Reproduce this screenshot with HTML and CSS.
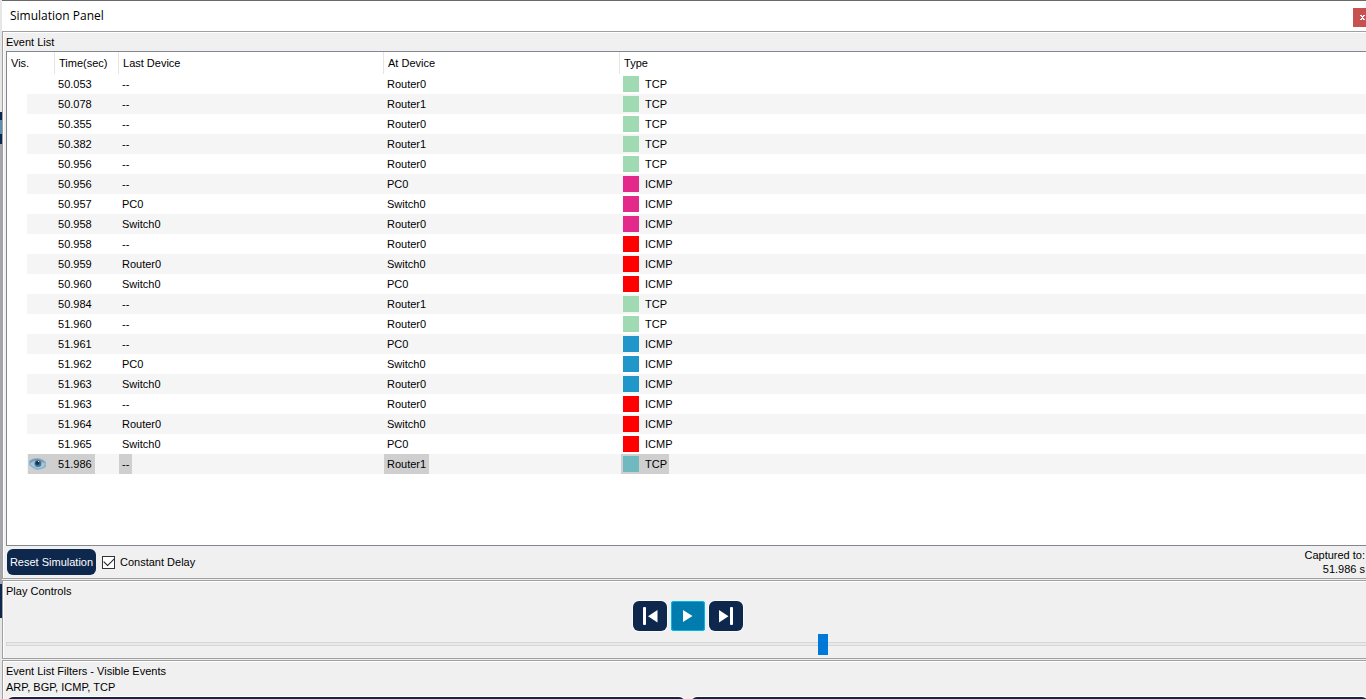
FILE: index.html
```html
<!DOCTYPE html>
<html lang="en">
<head>
<meta charset="utf-8">
<title>Simulation Panel</title>
<link rel="stylesheet" href="styles.css">
</head>
<body>
<div class="workspace-edge" aria-hidden="true">
  <div class="edge-light"></div>
  <div class="edge-tool"></div>
  <div class="edge-frame"></div>
  <div class="edge-button"></div>
  <div class="edge-rest"></div>
</div>
<main class="panel">
  <header class="titlebar">
    <h1 class="title">Simulation Panel</h1>
    <button class="close" type="button" aria-label="Close"><svg width="6" height="5" viewBox="0 0 6 5" shape-rendering="crispEdges"><path d="M0 0h2v1h1V0h2v1H4v1H3v1h1v1h1v1H3V4H2v1H0V4h1V3h1V2H1V1H0z" fill="#fff"/></svg></button>
  </header>
  <section class="group events">
    <h2 class="group-title">Event List</h2>
    <div class="list">
      <table class="event-table">
        <colgroup><col class="c-indent"><col class="c-vis"><col class="c-time"><col class="c-last"><col class="c-at"><col></colgroup>
        <thead><tr><th colspan="2">Vis.</th><th>Time(sec)</th><th>Last Device</th><th>At Device</th><th>Type</th></tr></thead>
        <tbody id="rows"></tbody>
      </table>
    </div>
    <div class="list-footer">
      <button class="reset" type="button">Reset Simulation</button>
      <label class="delay"><input type="checkbox" class="check" checked>Constant Delay</label>
      <p class="captured">Captured to:<br>51.986 s</p>
    </div>
  </section>
  <section class="group play">
    <h2 class="group-title">Play Controls</h2>
    <div class="buttons">
      <button class="step" type="button" aria-label="Go back to previous event"><svg width="34" height="30" viewBox="0 0 34 30"><rect x="10" y="6" width="3" height="18" rx="1" fill="#fff"/><path d="M24.500 9v12.500L15 15.200z" fill="#fff"/></svg></button>
      <button class="step playing" type="button" aria-label="Play"><svg width="34" height="30" viewBox="0 0 34 30"><path d="M12 9v12l9.500-6z" fill="#fff"/></svg></button>
      <button class="step" type="button" aria-label="Capture then forward"><svg width="34" height="30" viewBox="0 0 34 30"><rect x="21" y="6" width="3" height="18" rx="1" fill="#fff"/><path d="M10 9v12.500l9.500-6.300z" fill="#fff"/></svg></button>
    </div>
    <input class="speed" type="range" min="0" max="1000" value="601" aria-label="Play speed">
  </section>
  <section class="group filters">
    <h2 class="group-title">Event List Filters - Visible Events</h2>
    <p class="filter-list">ARP, BGP, ICMP, TCP</p>
    <div class="filter-buttons">
      <button class="filter" type="button" aria-label="Edit Filters"></button>
      <button class="filter" type="button" aria-label="Show All/None"></button>
    </div>
  </section>
</main>
<script src="events.js"></script>
</body>
</html>
```
FILE: styles.css
```css
* { box-sizing: border-box; }
html, body { height: 100%; }
body {
  margin: 0;
  display: flex;
  overflow: hidden;
  background: #f0f0f0;
  color: #000;
  font: 11px/16px "Liberation Sans", Arial, sans-serif;
}
h1, h2, p { margin: 0; font: inherit; }
button { padding: 0; border: 0; font: inherit; }
svg { display: block; }

.workspace-edge { flex: none; width: 2px; display: flex; flex-direction: column; }
.edge-light { height: 112px; background: #e6e6e6; }
.edge-tool { height: 32px; background: linear-gradient(#0d274d 8px, #5d8fae 8px 22px, #0d274d 22px); }
.edge-frame { height: 440px; background: #a5a5aa; }
.edge-button { height: 34px; background: #0d274d; }
.edge-rest { flex: 1; background: #e6e6e6; }

.panel { flex: 1; min-width: 0; display: flex; flex-direction: column; }
.titlebar {
  display: flex;
  justify-content: space-between;
  height: 31px;
  padding-left: 8px;
  background: #fff;
  border-top: 1px solid #696969;
}
.title { font: 12px/30px "Open Sans", "Noto Sans", sans-serif; }
.close {
  width: 13px;
  height: 19px;
  margin-top: 7px;
  padding-left: 7px;
  background: #c75050;
}

.group {
  border: solid #a0a0a0;
  border-width: 1px 0 1px 1px;
  box-shadow: inset 1px 1px #fff;
  padding-left: 3px;
}
.events { flex: 1; min-height: 0; display: flex; flex-direction: column; padding-top: 2px; }
.list {
  flex: 1;
  min-height: 0;
  margin-top: 1px;
  background: #fff;
  border: solid #828790;
  border-width: 1px 0 1px 1px;
}
.event-table { width: 100%; table-layout: fixed; border-spacing: 0; }
.c-indent { width: 20px; }
.c-vis { width: 28px; }
.c-time { width: 64px; }
.c-last { width: 265px; }
.c-at { width: 236px; }
th {
  height: 22px;
  padding: 0 4px;
  text-align: left;
  font-weight: normal;
  border-right: 1px solid #e5e5e5;
}
th:last-child { border-right: 0; }
td { height: 20px; padding: 0; white-space: nowrap; }
tbody tr:nth-child(even) td:not(:first-child) { background: #f5f5f5; }
.cell { display: inline-flex; align-items: center; height: 20px; padding: 0 3px; vertical-align: top; }
.type { gap: 6px; margin-left: 1px; padding: 0 2px; }
.swatch { width: 16px; height: 16px; }
.tcp { background: #a0dab3; }
.tcp-current { background: #70babf; }
.ping-a { background: #e32a8b; }
.ping-b { background: #f00; }
.ping-c { background: #2196c9; }
.current .cell { background: #cfcfcf; }
.current .eye-cell { display: flex; margin-left: 1px; padding: 0 1px; }

.list-footer { display: flex; align-items: center; height: 32px; }
.reset {
  width: 89px;
  height: 26px;
  margin-left: 1px;
  border-radius: 6px;
  background: #0d274d;
  color: #fff;
}
.delay { display: flex; align-items: center; gap: 5px; margin-left: 6px; }
.check {
  appearance: none;
  width: 13px;
  height: 13px;
  margin: 0;
  border: 1px solid #333;
  background: #fff;
  display: grid;
  place-items: center;
}
.check:checked::before {
  content: "";
  width: 9px;
  height: 5px;
  border: solid #222;
  border-width: 0 0 1px 1px;
  transform: rotate(-45deg) translate(1px, -1px);
}
.captured { margin-left: auto; padding-right: 1px; text-align: right; line-height: 14px; }

.play { margin-top: 1px; padding-top: 2px; height: 79px; }
.buttons { display: flex; justify-content: center; gap: 4px; margin-top: 2px; padding-left: 4px; }
.step { width: 34px; height: 30px; border-radius: 6px; background: #0d274d; box-shadow: 0 0 0 1px #f8f8f8; }
.playing { border-radius: 3px; background: #007cae; box-shadow: inset 0 0 0 1px #00b8eb; }
.speed {
  appearance: none;
  display: block;
  width: 100%;
  height: 21px;
  margin: 2px 0 0;
  background: transparent;
}
.speed::-webkit-slider-runnable-track {
  height: 4px;
  background: #e7eaea;
  border: solid #d6d6d6;
  border-width: 1px 0 1px 1px;
}
.speed::-webkit-slider-thumb {
  appearance: none;
  width: 10px;
  height: 21px;
  margin-top: -9px;
  background: #0078d7;
}

.filters { margin-top: 1px; padding-top: 2px; height: 39px; overflow: hidden; border-bottom: 0; }
.filter-buttons { display: grid; grid-template-columns: 1fr 1fr; gap: 6px; margin: 2px -2px 0 1px; }
.filter { height: 26px; border-radius: 6px; background: #0d274d; box-shadow: 0 0 0 1px #fff; }
```
FILE: events.js
```js
const events = [
  ["50.053", "--", "Router0", "TCP", "tcp"],
  ["50.078", "--", "Router1", "TCP", "tcp"],
  ["50.355", "--", "Router0", "TCP", "tcp"],
  ["50.382", "--", "Router1", "TCP", "tcp"],
  ["50.956", "--", "Router0", "TCP", "tcp"],
  ["50.956", "--", "PC0", "ICMP", "ping-a"],
  ["50.957", "PC0", "Switch0", "ICMP", "ping-a"],
  ["50.958", "Switch0", "Router0", "ICMP", "ping-a"],
  ["50.958", "--", "Router0", "ICMP", "ping-b"],
  ["50.959", "Router0", "Switch0", "ICMP", "ping-b"],
  ["50.960", "Switch0", "PC0", "ICMP", "ping-b"],
  ["50.984", "--", "Router1", "TCP", "tcp"],
  ["51.960", "--", "Router0", "TCP", "tcp"],
  ["51.961", "--", "PC0", "ICMP", "ping-c"],
  ["51.962", "PC0", "Switch0", "ICMP", "ping-c"],
  ["51.963", "Switch0", "Router0", "ICMP", "ping-c"],
  ["51.963", "--", "Router0", "ICMP", "ping-b"],
  ["51.964", "Router0", "Switch0", "ICMP", "ping-b"],
  ["51.965", "Switch0", "PC0", "ICMP", "ping-b"],
  ["51.986", "--", "Router1", "TCP", "tcp-current"]
];
const eye = '<span class="cell eye-cell"><svg width="17" height="12" viewBox="0 0 17 12"><path d="M0 3Q3 0 8 0t9 4v5q-4 3-9 3-4-1-8-5z" fill="#8fb3cd"/><path d="M1 4Q7-1 15 4" fill="none" stroke="#6a8ca6"/><path d="M1 6q7 6 13 3l2-3q-5-4-10-3z" fill="#a5c8df"/><circle cx="9" cy="5.500" r="3.500" fill="#467393"/><circle cx="8.500" cy="5" r="2" fill="#1b3247"/><path d="M9 3h1v1H9z" fill="#d8eaf6"/></svg></span>';
document.getElementById("rows").innerHTML = events.map(([time, last, at, type, color], i) => {
  const current = i === events.length - 1;
  return `<tr class="${current ? "current" : ""}"><td></td><td>${current ? eye : ""}</td>` +
    [time, last, at].map(t => `<td><span class="cell">${t}</span></td>`).join("") +
    `<td><span class="cell type"><span class="swatch ${color}"></span>${type}</span></td></tr>`;
}).join("");
```
